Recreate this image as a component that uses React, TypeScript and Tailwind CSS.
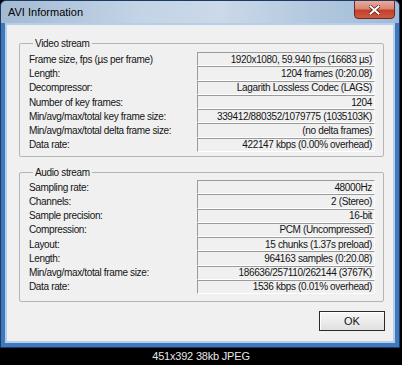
const video: [string, string][] = [
  ["Frame size, fps (µs per frame)", "1920x1080, 59.940 fps (16683 µs)"],
  ["Length:", "1204 frames (0:20.08)"],
  ["Decompressor:", "Lagarith Lossless Codec (LAGS)"],
  ["Number of key frames:", "1204"],
  ["Min/avg/max/total key frame size:", "339412/880352/1079775 (1035103K)"],
  ["Min/avg/max/total delta frame size:", "(no delta frames)"],
  ["Data rate:", "422147 kbps (0.00% overhead)"],
];

const audio: [string, string][] = [
  ["Sampling rate:", "48000Hz"],
  ["Channels:", "2 (Stereo)"],
  ["Sample precision:", "16-bit"],
  ["Compression:", "PCM (Uncompressed)"],
  ["Layout:", "15 chunks (1.37s preload)"],
  ["Length:", "964163 samples (0:20.08)"],
  ["Min/avg/max/total frame size:", "186636/257110/262144 (3767K)"],
  ["Data rate:", "1536 kbps (0.01% overhead)"],
];

function Rows({ rows, h }: { rows: [string, string][]; h: string }) {
  return (
    <div className="flex flex-col">
      {rows.map(([l, v], i) => (
        <div key={i} className={`flex ${h}`}>
          <div className="w-[168px] flex items-center whitespace-nowrap">{l}</div>
          <div className="flex-1 flex items-center justify-end pr-[2px] border-t border-l border-t-[#9a9a9a] border-l-[#9a9a9a] border-b border-r border-b-white border-r-white whitespace-nowrap">
            {v}
          </div>
        </div>
      ))}
    </div>
  );
}

export default function App() {
  return (
    <div className="w-[402px] h-[365px] bg-black flex flex-col font-['Liberation_Sans',Arial,sans-serif] text-[10px] tracking-[-0.35px] text-[#141414]">
      <div className="w-[400px] h-[348px] rounded-t-[6px] border border-[#1d3a62] bg-[#3f78bd] flex flex-col overflow-hidden">
        <div className="h-[22px] shrink-0 flex items-start justify-between bg-[linear-gradient(90deg,#a3bad3_0%,#c3d4e6_35%,#cbd9e8_55%,#b1c7de_80%,#9fbad8_100%)]">
          <div className="pl-[7px] pt-[5px] text-[11px] tracking-[0px] leading-[13px] text-black">AVI Information</div>
          <div className="mr-[4px] mt-[-1px] w-[41px] h-[19px] rounded-b-[4px] border border-[#6a2a22] bg-[linear-gradient(180deg,#e9ab9c_0%,#d98672_45%,#c2402c_55%,#cf5a3f_100%)] flex items-center justify-center">
            <svg width="11" height="10" viewBox="0 0 11 10">
              <path d="M1.5 1.5 L9.5 8.5 M9.5 1.5 L1.5 8.5" stroke="#4a1a14" strokeWidth="3.4" strokeLinecap="square" />
              <path d="M1.5 1.5 L9.5 8.5 M9.5 1.5 L1.5 8.5" stroke="#ffffff" strokeWidth="2" strokeLinecap="square" />
            </svg>
          </div>
        </div>
        <div className="flex-1 mx-[4px] mb-[4px] border-2 border-[#b4cfec] flex">
          <div className="flex-1 bg-[#f0f0f0] pl-[12px] pr-[9px] pt-[12px] flex flex-col">
            <fieldset className="border border-[#b5b5b5] rounded-[2px] pl-[9px] pr-[8px] pt-[2px] pb-[4px]">
              <legend className="ml-[4px] px-[2px] leading-[13px]">Video stream</legend>
              <Rows rows={video} h="h-[14.3px]" />
            </fieldset>
            <fieldset className="mt-[9px] border border-[#b5b5b5] rounded-[2px] pl-[9px] pr-[8px] pt-[1px] pb-[7px]">
              <legend className="ml-[4px] px-[2px] leading-[13px]">Audio stream</legend>
              <Rows rows={audio} h="h-[14.25px]" />
            </fieldset>
            <div className="mt-[9px] flex justify-end mr-[-1px]">
              <div className="w-[66px] h-[20px] border border-[#2a2a2a] bg-[linear-gradient(180deg,#f6f6f6_0%,#ececec_50%,#e0e0e0_100%)] shadow-[inset_1px_1px_0_#ffffff] flex items-center justify-center text-[11px] tracking-[0px]">
                OK
              </div>
            </div>
          </div>
        </div>
      </div>
      <div className="flex-1 flex items-center justify-center text-[11px] tracking-[-0.2px] text-[#e6e6e6]">
        451x392 38kb JPEG
      </div>
    </div>
  );
}
